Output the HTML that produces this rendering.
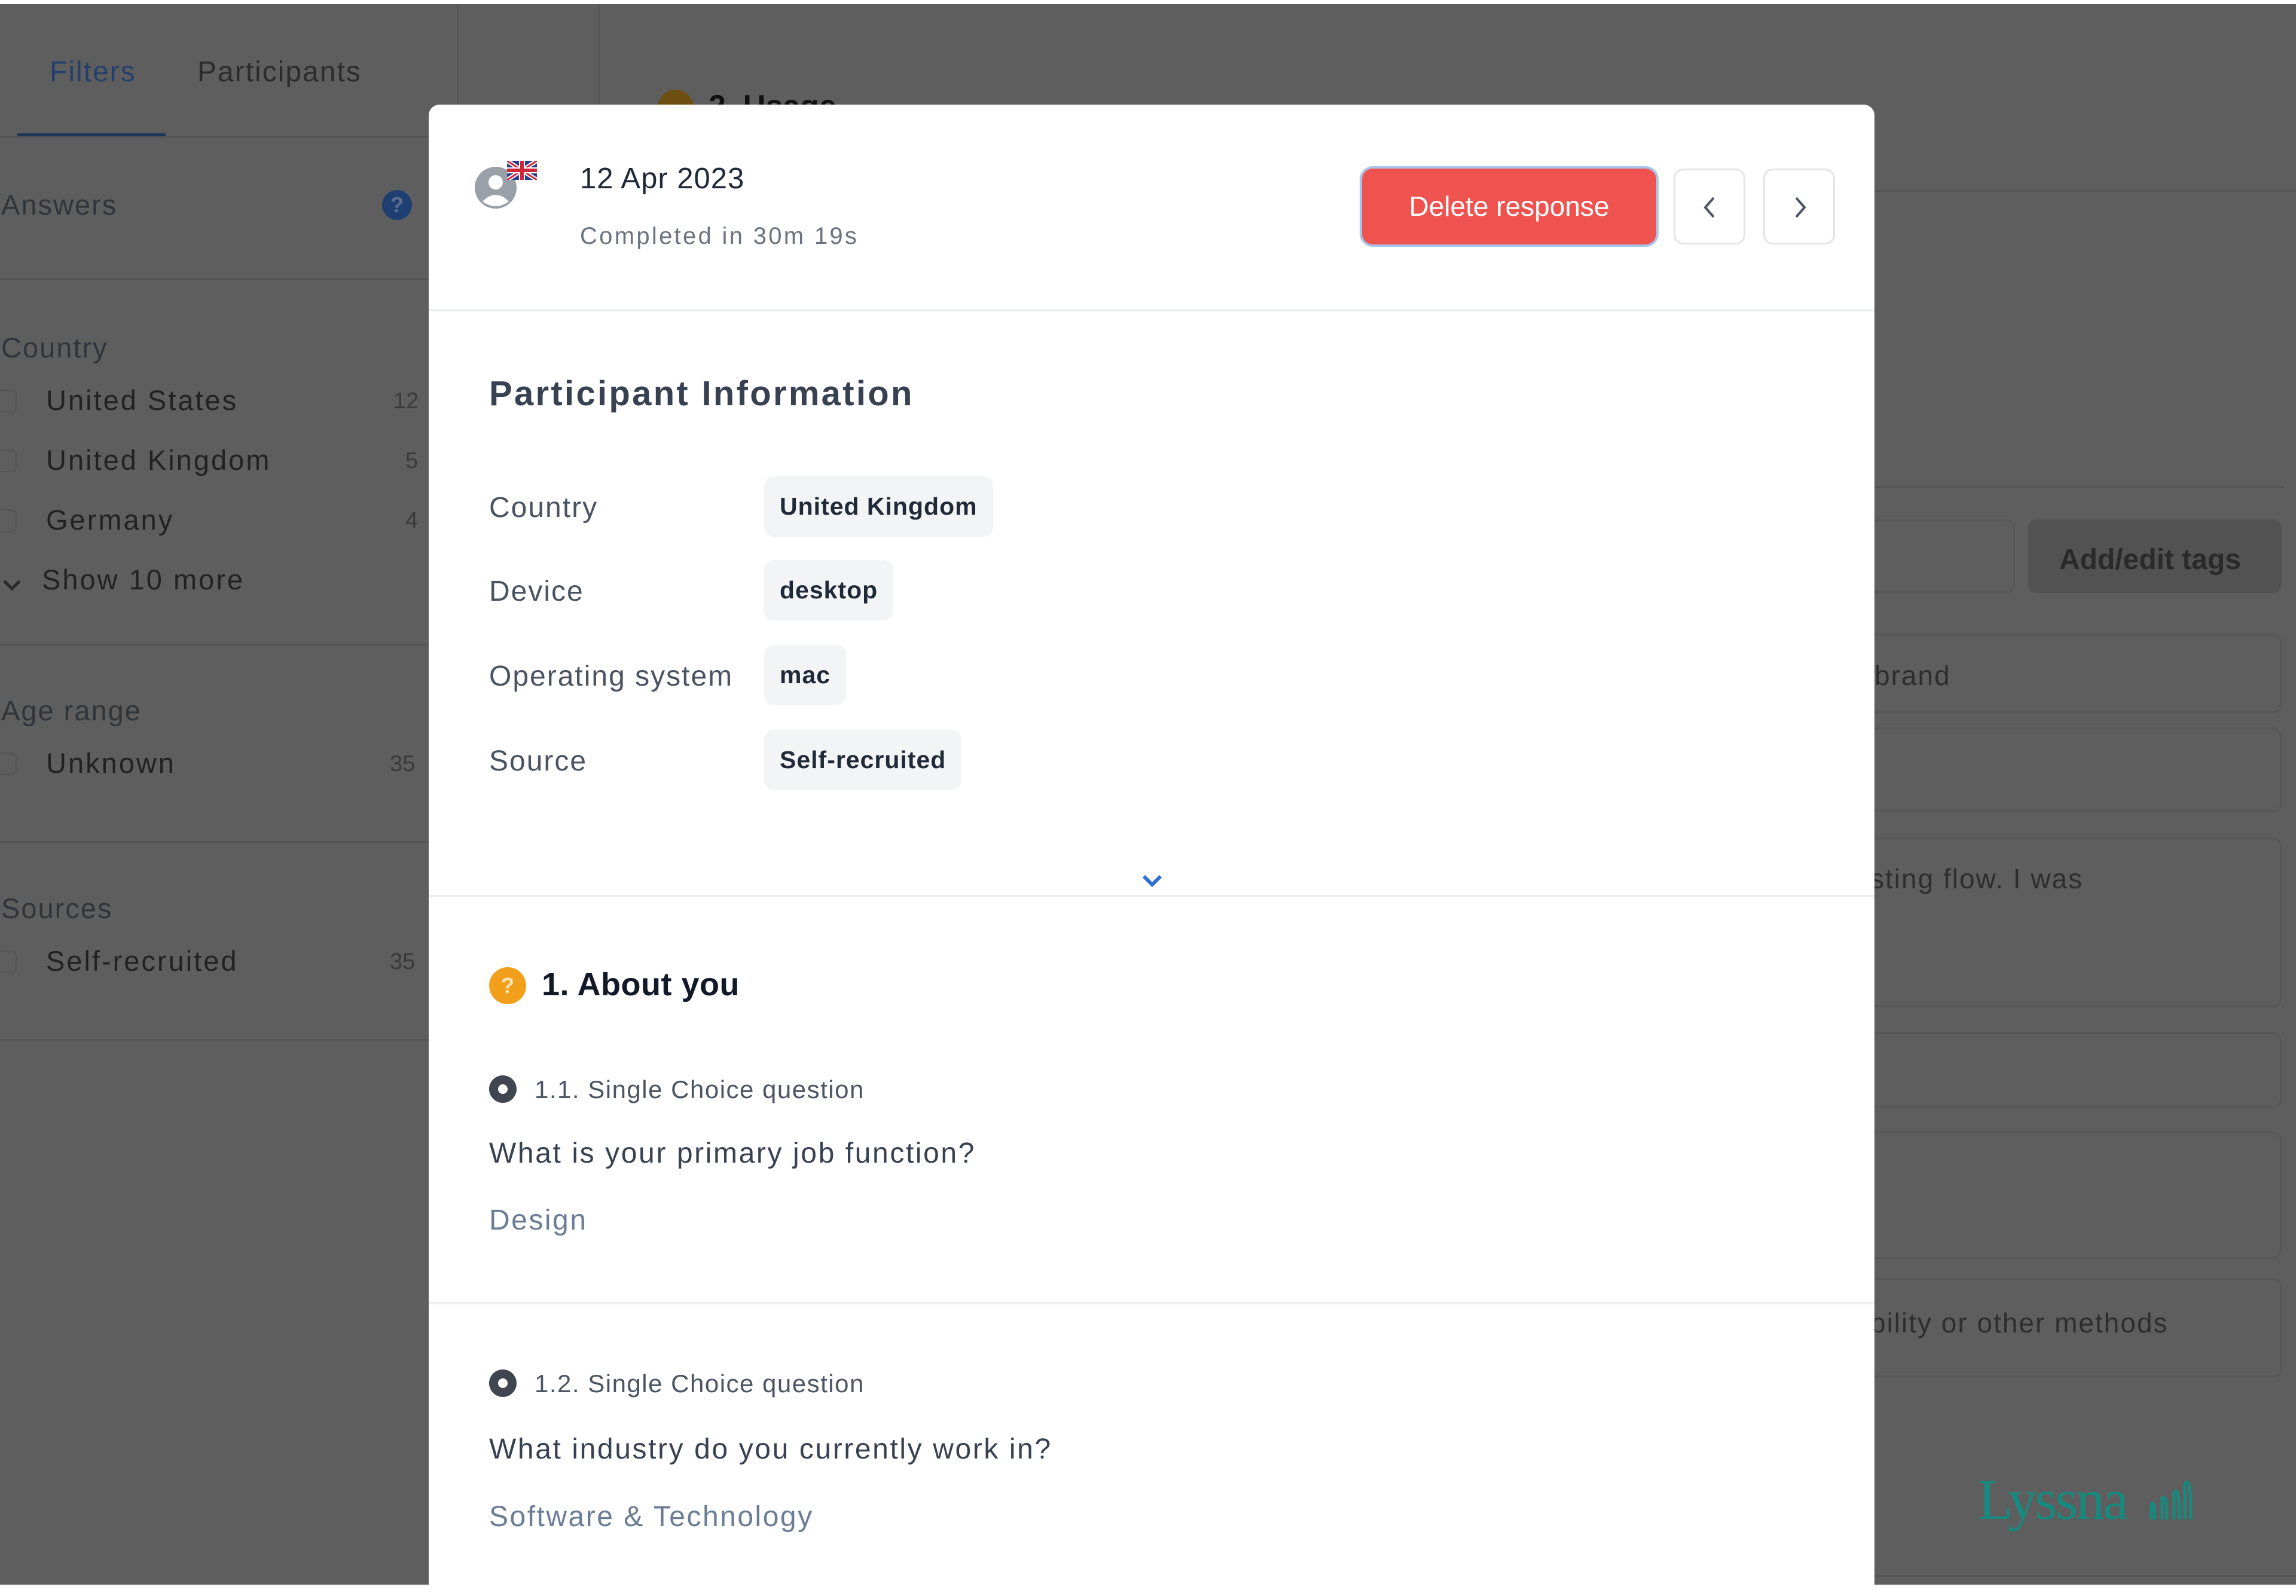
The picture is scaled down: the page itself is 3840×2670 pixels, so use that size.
<!DOCTYPE html>
<html><head><meta charset="utf-8"><style>
*{margin:0;padding:0;box-sizing:border-box}
body{width:3840px;height:2670px;background:#fff;position:relative;overflow:hidden;font-family:"Liberation Sans",sans-serif}
.a{position:absolute;white-space:nowrap;line-height:1}
#ov{position:absolute;left:0;top:7px;width:3840px;height:2644px;background:#5e5e5e}
.hl{position:absolute;height:3px;background:#555}
.vl{position:absolute;width:3px;background:#575757}
.sb{color:#222;font-size:47px;letter-spacing:3px}
.sh{color:#30353c;font-size:47px;letter-spacing:2px}
.cb{position:absolute;left:-10px;width:38px;height:38px;border:2px solid #545454;border-radius:8px}
.cnt{color:#3a3a3a;font-size:38px}
.box{position:absolute;left:3100px;width:716px;border:3px solid #575757;border-radius:14px}
#m{position:absolute;left:717px;top:175px;width:2418px;height:2477px;background:#fff;border-radius:18px 18px 0 0}
.lbl{color:#4a5361;font-size:48px;letter-spacing:2px}
.chip{position:absolute;left:561px;height:101px;background:#f3f4f6;border-radius:16px;font-size:41px;font-weight:bold;color:#1f2937;padding:0 26px;line-height:101px;letter-spacing:1px}
.div{position:absolute;left:0;width:2418px;height:4px;background:#eceef1}
.nav{position:absolute;top:107px;width:120px;height:127px;border:3px solid #e3e5e8;border-radius:16px;background:#fff}
.q{font-size:42px;color:#4b5563;letter-spacing:1.5px}
.qt{font-size:48px;color:#374151;letter-spacing:2.6px}
.an{font-size:48px;color:#6b7d95;letter-spacing:2.5px}
.rad{position:absolute;left:101px;width:46px;height:46px;border-radius:50%;background:#3f4651}
.rad:after{content:"";position:absolute;left:15px;top:15px;width:16px;height:16px;border-radius:50%;background:#fff}
</style></head><body>
<div id="ov">
 <div class="a" style="left:83px;top:90px;font-size:48px;color:#243f6b;letter-spacing:2px">Filters</div>
 <div class="a" style="left:330px;top:90px;font-size:48px;color:#2c2c2c;letter-spacing:2px">Participants</div>
 <div style="position:absolute;left:29px;top:216px;width:248px;height:7px;background:#1f3656"></div>
 <div class="hl" style="left:0;top:221px;width:764px"></div>
 <div class="vl" style="left:764px;top:0;height:1730px"></div>
 <div class="vl" style="left:1000px;top:0;height:310px"></div>
 <div class="a sh" style="left:2px;top:312px">Answers</div>
 <div style="position:absolute;left:639px;top:311px;width:50px;height:50px;border-radius:50%;background:#1f3f73;color:#5e6f8a;font-size:36px;font-weight:bold;text-align:center;line-height:50px">?</div>
 <div class="hl" style="left:0;top:458px;width:764px"></div>
 <div class="a sh" style="left:2px;top:551px">Country</div>
 <div class="cb" style="top:645px"></div><div class="a sb" style="left:77px;top:639px">United States</div><div class="a cnt" style="left:658px;top:645px">12</div>
 <div class="cb" style="top:745px"></div><div class="a sb" style="left:77px;top:739px">United Kingdom</div><div class="a cnt" style="left:678px;top:745px">5</div>
 <div class="cb" style="top:845px"></div><div class="a sb" style="left:77px;top:839px">Germany</div><div class="a cnt" style="left:678px;top:845px">4</div>
 <svg style="position:absolute;left:2px;top:960px" width="36" height="24" viewBox="0 0 36 24"><path d="M5 5 L18 18 L31 5" fill="none" stroke="#2a2a2a" stroke-width="5"/></svg>
 <div class="a sb" style="left:70px;top:939px">Show 10 more</div>
 <div class="hl" style="left:0;top:1070px;width:764px"></div>
 <div class="a sh" style="left:2px;top:1158px">Age range</div>
 <div class="cb" style="top:1252px"></div><div class="a sb" style="left:77px;top:1246px">Unknown</div><div class="a cnt" style="left:652px;top:1252px">35</div>
 <div class="hl" style="left:0;top:1400px;width:764px"></div>
 <div class="a sh" style="left:2px;top:1489px">Sources</div>
 <div class="cb" style="top:1583px"></div><div class="a sb" style="left:77px;top:1577px">Self-recruited</div><div class="a cnt" style="left:652px;top:1583px">35</div>
 <div class="hl" style="left:0;top:1731px;width:764px"></div>
 <div style="position:absolute;left:1100px;top:143px;width:60px;height:60px;border-radius:50%;background:#6e4f12"></div>
 <div class="a" style="left:1185px;top:145px;font-size:52px;font-weight:bold;color:#111">2. Usage</div>
 <div class="hl" style="left:1003px;top:311px;width:2837px"></div>
 <div class="hl" style="left:3130px;top:806px;width:690px"></div>
 <div class="box" style="left:3000px;top:862px;width:370px;height:123px"></div>
 <div style="position:absolute;left:3392px;top:862px;width:424px;height:123px;background:#525252;border-radius:14px"></div>
 <div class="a" style="left:3444px;top:906px;font-size:48px;font-weight:bold;color:#2a2a2a">Add/edit tags</div>
 <div class="box" style="top:1053px;height:133px"></div>
 <div class="a" style="left:3135px;top:1100px;font-size:46px;color:#2e2e2e;letter-spacing:2px">brand</div>
 <div class="box" style="top:1210px;height:142px"></div>
 <div class="box" style="top:1394px;height:284px"></div>
 <div class="a" style="left:3128px;top:1440px;font-size:46px;color:#2e2e2e;letter-spacing:2px">sting flow. I was</div>
 <div class="box" style="top:1720px;height:127px"></div>
 <div class="box" style="top:1886px;height:213px"></div>
 <div class="box" style="top:2131px;height:166px"></div>
 <div class="a" style="left:3128px;top:2183px;font-size:46px;color:#2e2e2e;letter-spacing:2px">bility or other methods</div>
 <div class="a" style="left:3308px;top:2454px;font-size:96px;color:#178a80;font-family:'Liberation Serif',serif;letter-spacing:-3px">Lyssna</div>
 <svg style="position:absolute;left:3590px;top:2455px" width="80" height="90" viewBox="0 0 80 90"><g fill="none" stroke="#178a80" stroke-width="5"><path d="M8 80 V55 Q14 45 14 80"/><path d="M26 80 V45 Q34 35 34 80"/><path d="M46 80 V35 Q55 22 55 80"/><path d="M64 80 V20 Q75 5 74 80"/></g></svg>
 <div class="hl" style="left:3135px;top:2628px;width:705px;background:#545454"></div>
</div>

<div id="m">
 <svg style="position:absolute;left:72px;top:94px" width="90" height="90" viewBox="0 0 90 90"><circle cx="40" cy="45" r="35" fill="#9aa0a8"/><circle cx="40" cy="36" r="12" fill="#fff"/><path d="M18 68 Q40 46 62 68 Q40 84 18 68Z" fill="#fff"/></svg>
 <svg style="position:absolute;left:131px;top:94px" width="50" height="32" viewBox="0 0 50 32"><rect width="50" height="32" fill="#2a3f8f"/><path d="M0 0L50 32M50 0L0 32" stroke="#fff" stroke-width="7"/><path d="M0 0L50 32M50 0L0 32" stroke="#d0263a" stroke-width="3"/><path d="M25 0V32M0 16H50" stroke="#fff" stroke-width="10"/><path d="M25 0V32M0 16H50" stroke="#d0263a" stroke-width="6"/></svg>
 <div class="a" style="left:253px;top:100px;font-size:49px;color:#1f2937;letter-spacing:1px">12 Apr 2023</div>
 <div class="a" style="left:253px;top:200px;font-size:40px;color:#6b7280;letter-spacing:3.3px">Completed in 30m 19s</div>
 <div style="position:absolute;left:1561px;top:107px;width:492px;height:127px;background:#ef5350;border-radius:18px;box-shadow:0 0 0 4px #a9c4ea;color:#fff;font-size:46px;text-align:center;line-height:127px">Delete response</div>
 <div class="nav" style="left:2082px"><svg style="position:absolute;left:40px;top:42px" width="36" height="40" viewBox="0 0 36 40"><path d="M24 4 L10 20 L24 36" fill="none" stroke="#4b5563" stroke-width="4"/></svg></div>
 <div class="nav" style="left:2232px"><svg style="position:absolute;left:40px;top:42px" width="36" height="40" viewBox="0 0 36 40"><path d="M12 4 L26 20 L12 36" fill="none" stroke="#4b5563" stroke-width="4"/></svg></div>
 <div class="div" style="top:342px"></div>
 <div class="a" style="left:101px;top:455px;font-size:58px;font-weight:bold;color:#374151;letter-spacing:3.3px">Participant Information</div>
 <div class="a lbl" style="left:101px;top:651px">Country</div><div class="chip" style="top:622px">United Kingdom</div>
 <div class="a lbl" style="left:101px;top:791px">Device</div><div class="chip" style="top:762px">desktop</div>
 <div class="a lbl" style="left:101px;top:933px">Operating system</div><div class="chip" style="top:904px">mac</div>
 <div class="a lbl" style="left:101px;top:1075px">Source</div><div class="chip" style="top:1046px">Self-recruited</div>
 <svg style="position:absolute;left:1190px;top:1285px" width="40" height="26" viewBox="0 0 40 26"><path d="M6 6 L20 20 L34 6" fill="none" stroke="#2f6fd6" stroke-width="6"/></svg>
 <div class="div" style="top:1322px"></div>
 <div style="position:absolute;left:101px;top:1443px;width:62px;height:62px;border-radius:50%;background:#f2a01c;color:#fde6b8;font-size:36px;font-weight:bold;text-align:center;line-height:62px">?</div>
 <div class="a" style="left:189px;top:1445px;font-size:54px;font-weight:bold;color:#111827;letter-spacing:0.5px">1. About you</div>
 <div class="rad" style="top:1624px"></div>
 <div class="a q" style="left:177px;top:1627px">1.1. Single Choice question</div>
 <div class="a qt" style="left:101px;top:1731px">What is your primary job function?</div>
 <div class="a an" style="left:101px;top:1843px">Design</div>
 <div class="div" style="top:2003px"></div>
 <div class="rad" style="top:2116px"></div>
 <div class="a q" style="left:177px;top:2119px">1.2. Single Choice question</div>
 <div class="a qt" style="left:101px;top:2226px">What industry do you currently work in?</div>
 <div class="a an" style="left:101px;top:2339px">Software &amp; Technology</div>
</div>
</body></html>
